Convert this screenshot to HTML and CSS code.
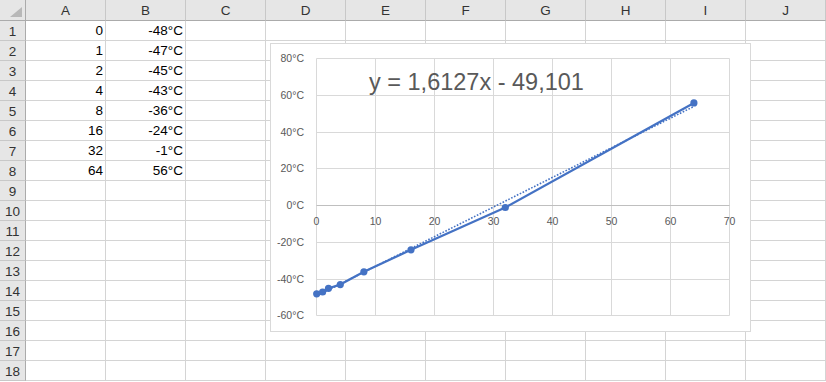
FILE: index.html
```html
<!DOCTYPE html>
<html lang="en">
<head>
    <meta charset="UTF-8">
    <title>Sheet1</title>
    <link rel="stylesheet" href="styles.css">
</head>
<body>
    <div class="sheet" id="sheet"></div>

    <div class="chart">
        <svg width="479" height="287" viewBox="0 0 479 287">
            <g class="grid">
                <line x1="45.5" y1="14.5" x2="458.5" y2="14.5"/>
                <line x1="45.5" y1="51.5" x2="458.5" y2="51.5"/>
                <line x1="45.5" y1="88.5" x2="458.5" y2="88.5"/>
                <line x1="45.5" y1="124.5" x2="458.5" y2="124.5"/>
                <line x1="45.5" y1="198.5" x2="458.5" y2="198.5"/>
                <line x1="45.5" y1="235.5" x2="458.5" y2="235.5"/>
                <line x1="45.5" y1="271.5" x2="458.5" y2="271.5"/>
                <line x1="45.5" y1="14.5" x2="45.5" y2="271.5"/>
                <line x1="104.5" y1="14.5" x2="104.5" y2="271.5"/>
                <line x1="163.5" y1="14.5" x2="163.5" y2="271.5"/>
                <line x1="222.5" y1="14.5" x2="222.5" y2="271.5"/>
                <line x1="281.5" y1="14.5" x2="281.5" y2="271.5"/>
                <line x1="340.5" y1="14.5" x2="340.5" y2="271.5"/>
                <line x1="399.5" y1="14.5" x2="399.5" y2="271.5"/>
                <line x1="458.5" y1="14.5" x2="458.5" y2="271.5"/>
            </g>
            <line class="axis" x1="45.5" y1="161.5" x2="458.5" y2="161.5"/>

            <g class="ylabels">
                <text x="33" y="18">80°C</text>
                <text x="33" y="55">60°C</text>
                <text x="33" y="92">40°C</text>
                <text x="33" y="128">20°C</text>
                <text x="33" y="165">0°C</text>
                <text x="33" y="202">-20°C</text>
                <text x="33" y="239">-40°C</text>
                <text x="33" y="275">-60°C</text>
            </g>
            <g class="xlabels">
                <text x="45.5" y="181">0</text>
                <text x="104.5" y="181">10</text>
                <text x="163.5" y="181">20</text>
                <text x="222.5" y="181">30</text>
                <text x="281.5" y="181">40</text>
                <text x="340.5" y="181">50</text>
                <text x="399.5" y="181">60</text>
                <text x="458.5" y="181">70</text>
            </g>

            <!-- linear trendline -->
            <line class="trend" x1="45.7" y1="251.8" x2="422.9" y2="62.4"/>

            <polyline class="series" points="45.7,249.8 51.6,248 57.5,244.3 69.3,240.6 92.9,227.8 140,205.8 234.3,163.5 422.9,58.9"/>
            <g class="markers">
                <circle cx="45.7" cy="249.8" r="3.6"/>
                <circle cx="51.6" cy="248" r="3.6"/>
                <circle cx="57.5" cy="244.3" r="3.6"/>
                <circle cx="69.3" cy="240.6" r="3.6"/>
                <circle cx="92.9" cy="227.8" r="3.6"/>
                <circle cx="140" cy="205.8" r="3.6"/>
                <circle cx="234.3" cy="163.5" r="3.6"/>
                <circle cx="422.9" cy="58.9" r="3.6"/>
            </g>

            <text class="equation" x="98" y="46">y = 1,6127x - 49,101</text>
        </svg>
    </div>

    <script>
        const cols = ['A', 'B', 'C', 'D', 'E', 'F', 'G', 'H', 'I', 'J'];
        const data = [
            [0, '-48°C'], [1, '-47°C'], [2, '-45°C'], [4, '-43°C'],
            [8, '-36°C'], [16, '-24°C'], [32, '-1°C'], [64, '56°C']
        ];
        const sheet = document.getElementById('sheet');

        // column headers
        let head = '<div class="row head-row"><div class="corner"><span class="tri"></span></div>';
        cols.forEach(c => { head += `<div class="col-head">${c}</div>`; });
        head += '</div>';

        // rows
        let body = '';
        for (let r = 1; r <= 18; r++) {
            const values = data[r - 1] || [];
            body += `<div class="row"><div class="row-head">${r}</div>`;
            cols.forEach((c, i) => {
                const v = values[i] !== undefined ? values[i] : '';
                body += `<div class="cell">${v}</div>`;
            });
            body += '</div>';
        }
        sheet.innerHTML = head + body;
    </script>
</body>
</html>
```

FILE: styles.css
```css
body {
    margin: 0;
    background-color: #ffffff;
    font-family: "Liberation Sans", Arial, sans-serif;
    overflow: hidden;
}
.sheet {
    width: 826px;
}
.row {
    display: grid;
    grid-template-columns: 26px repeat(10, 80px);
    height: 20px;
}
.head-row {
    height: 21px;
}
.corner, .col-head, .row-head {
    background-color: #e6e6e6;
    color: #333;
    font-size: 13.5px;
    box-sizing: border-box;
    display: flex;
    align-items: center;
    justify-content: center;
}
.corner {
    position: relative;
    border-right: 1px solid #ababab;
    border-bottom: 1px solid #ababab;
}
.tri {
    position: absolute;
    right: 3px;
    bottom: 3px;
    width: 0;
    height: 0;
    border-left: 12px solid transparent;
    border-bottom: 10px solid #b8b8b8;
}
.col-head {
    border-right: 1px solid #c8c8c8;
    border-bottom: 1px solid #ababab;
    padding-top: 1px;
}
.row-head {
    border-right: 1px solid #ababab;
    border-bottom: 1px solid #c8c8c8;
    padding-top: 1px;
}
.cell {
    box-sizing: border-box;
    border-right: 1px solid #d4d4d4;
    border-bottom: 1px solid #d4d4d4;
    font-size: 13.5px;
    color: #000;
    display: flex;
    align-items: flex-end;
    justify-content: flex-end;
    padding: 0 2px 2px 0;
}
.chart {
    position: absolute;
    left: 270px;
    top: 43px;
    width: 479px;
    height: 287px;
    border: 1px solid #d9d9d9;
    background-color: #ffffff;
}
.chart svg {
    display: block;
}
.grid line {
    stroke: #d9d9d9;
    stroke-width: 1;
}
.axis {
    stroke: #bfbfbf;
    stroke-width: 1;
}
.ylabels text {
    font-size: 10.5px;
    fill: #595959;
    text-anchor: end;
}
.xlabels text {
    font-size: 10.5px;
    fill: #595959;
    text-anchor: middle;
}
.series {
    fill: none;
    stroke: #4472c4;
    stroke-width: 2.25;
    stroke-linejoin: round;
}
.markers circle {
    fill: #4472c4;
}
.trend {
    stroke: #4472c4;
    stroke-width: 1.6;
    stroke-dasharray: 1.6 1.6;
}
.equation {
    font-size: 23.5px;
    fill: #595959;
}
```
